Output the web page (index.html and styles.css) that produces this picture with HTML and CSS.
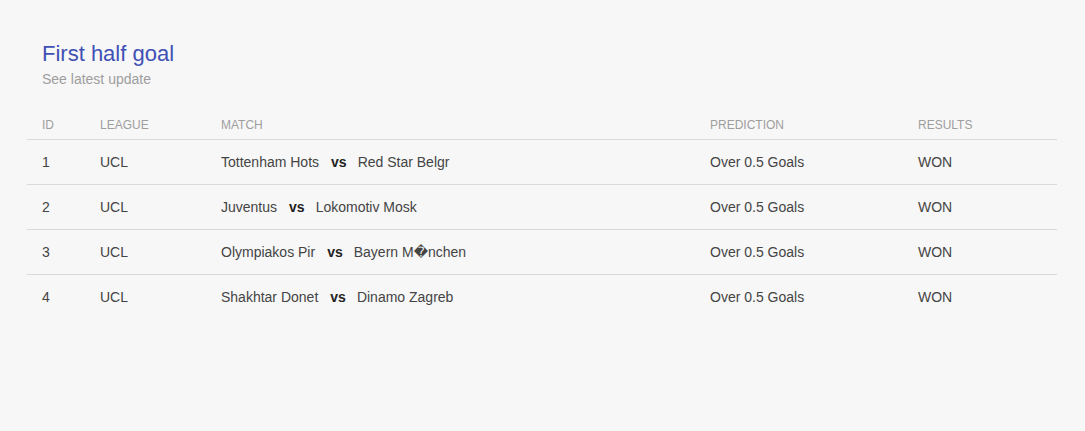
FILE: index.html
```html
<!DOCTYPE html>
<html>
<head>
<meta charset="utf-8">
<link rel="stylesheet" href="styles.css">
</head>
<body>
<div class="page">
  <h1 class="title">First half goal</h1>
  <p class="subtitle">See latest update</p>
  <table class="tips">
    <thead>
      <tr>
        <th class="c-id">ID</th>
        <th class="c-league">LEAGUE</th>
        <th class="c-match">MATCH</th>
        <th class="c-pred">PREDICTION</th>
        <th class="c-res">RESULTS</th>
      </tr>
    </thead>
    <tbody>
      <tr>
        <td>1</td><td>UCL</td>
        <td>Tottenham Hots<span class="vs">vs</span>Red Star Belgr</td>
        <td>Over 0.5 Goals</td><td>WON</td>
      </tr>
      <tr>
        <td>2</td><td>UCL</td>
        <td>Juventus<span class="vs">vs</span>Lokomotiv Mosk</td>
        <td>Over 0.5 Goals</td><td>WON</td>
      </tr>
      <tr>
        <td>3</td><td>UCL</td>
        <td>Olympiakos Pir<span class="vs">vs</span>Bayern M&#xFFFD;nchen</td>
        <td>Over 0.5 Goals</td><td>WON</td>
      </tr>
      <tr class="last">
        <td>4</td><td>UCL</td>
        <td>Shakhtar Donet<span class="vs">vs</span>Dinamo Zagreb</td>
        <td>Over 0.5 Goals</td><td>WON</td>
      </tr>
    </tbody>
  </table>
</div>
</body>
</html>
```
FILE: styles.css
```css
html, body {
  margin: 0;
  padding: 0;
  background: #f7f7f7;
}
body {
  font-family: "Liberation Sans", Arial, "DejaVu Sans", sans-serif;
  color: #444;
}
.page {
  padding: 41px 28px 0 27px;
}
.title {
  margin: 0 0 0 15px;
  font-size: 22px;
  line-height: 26px;
  font-weight: normal;
  color: #3f51b5;
}
.subtitle {
  margin: 2px 0 0 15px;
  font-size: 14px;
  line-height: 20px;
  color: #9e9e9e;
}
.tips {
  margin-top: 20px;
  width: 1030px;
  border-collapse: collapse;
  table-layout: fixed;
}
.tips th {
  box-sizing: border-box;
  text-align: left;
  font-weight: normal;
  font-size: 12px;
  line-height: 16px;
  color: #9e9e9e;
  padding: 8px 0 6px 15px;
  border-bottom: 1px solid #dadada;
}
.c-id { width: 58px; }
.c-league { width: 121px; }
.c-match { width: 489px; }
.c-pred { width: 208px; }
.c-res { width: 154px; }
.tips td {
  font-size: 14px;
  line-height: 20px;
  padding: 12px 0 12px 15px;
  border-bottom: 1px solid #dadada;
  white-space: nowrap;
}
.tips tr.last td {
  border-bottom: none;
}
.vs {
  font-weight: bold;
  color: #222;
  margin: 0 11px 0 12px;
}
```
